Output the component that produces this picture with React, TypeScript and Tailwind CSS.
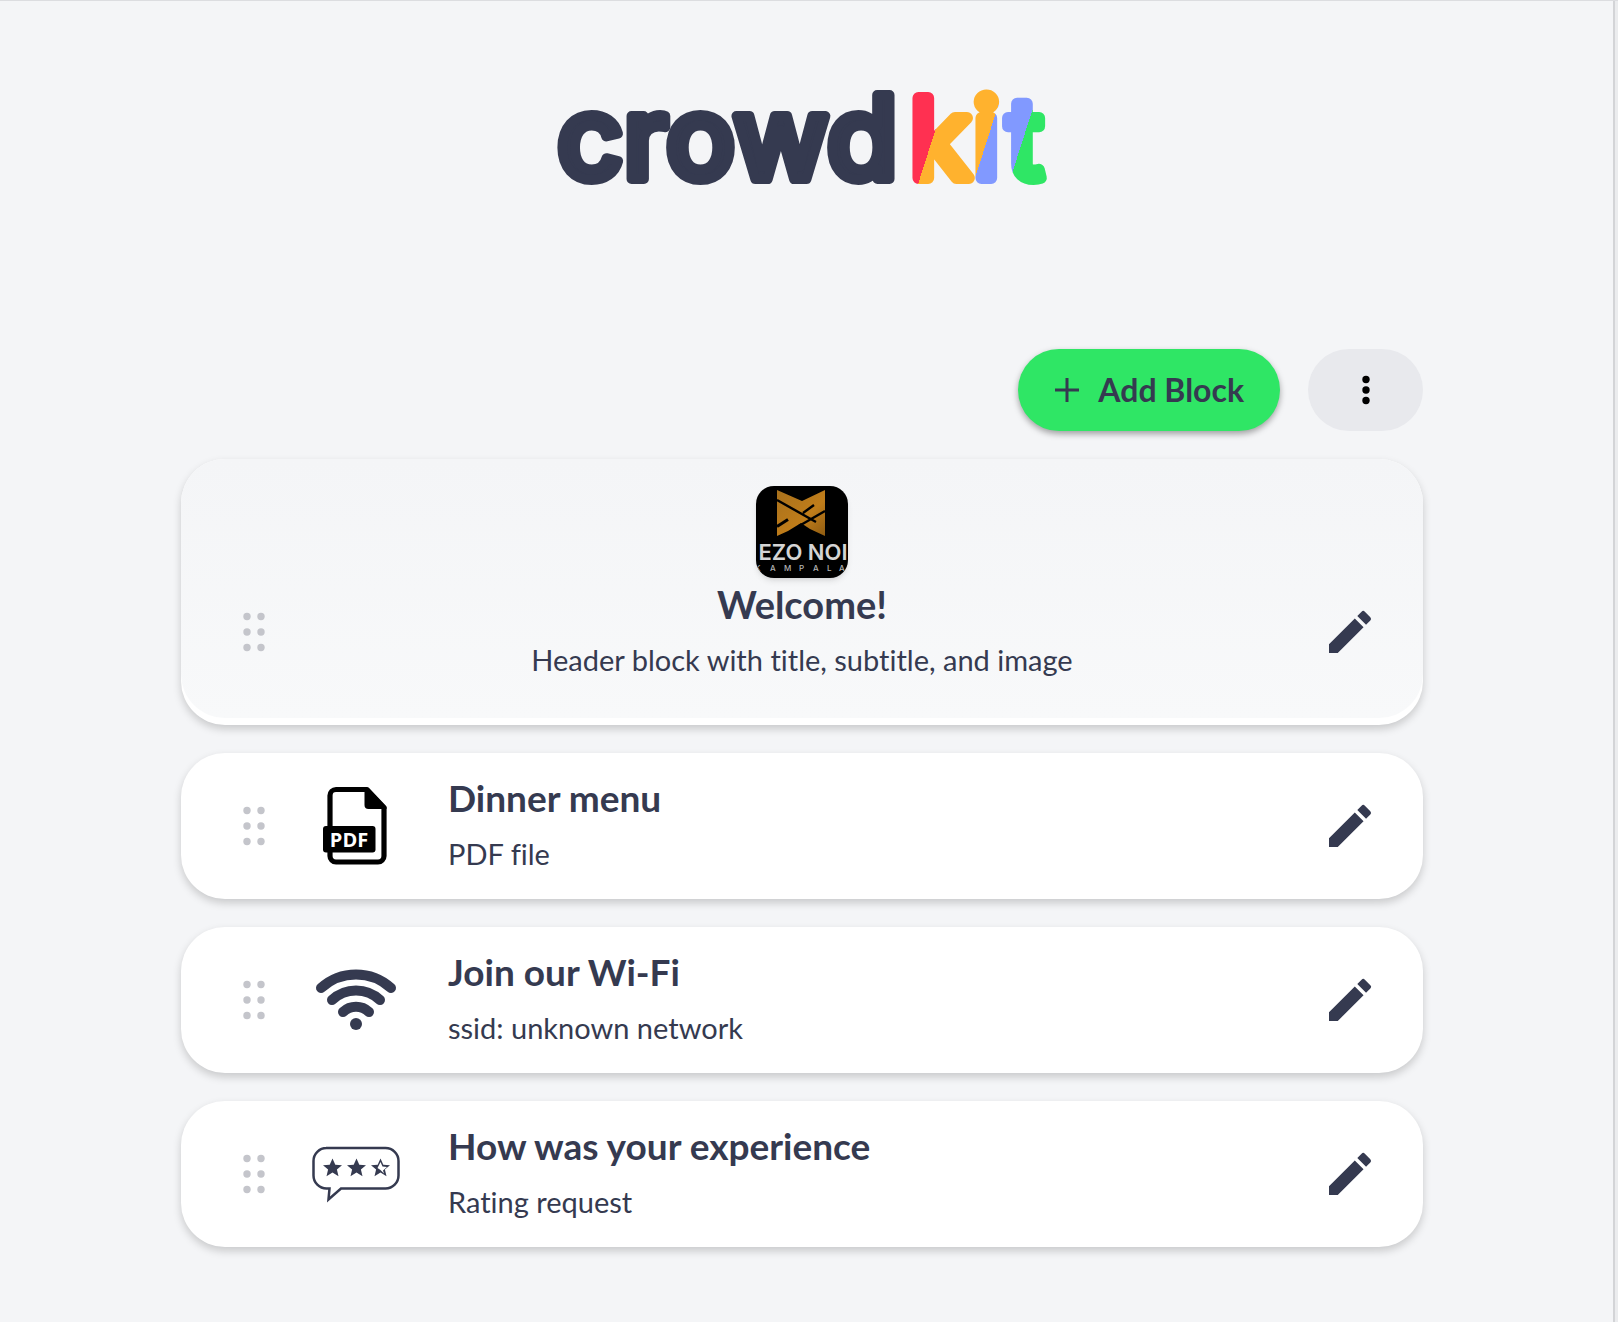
import React from 'react';

type BlockData = {
  id: string;
  title: string;
  subtitle: string;
  icon: React.ReactNode;
};

// Wordmark: "crowd" in one colour, then each letter of "kit" split diagonally into two
const Logo: React.FC = () => (
  <svg width="500" height="120" viewBox="0 0 500 120" role="img" aria-label="crowdkit" className="block overflow-visible">
    <defs>
      <linearGradient id="logo-k" gradientUnits="userSpaceOnUse" x1="364" y1="75" x2="384" y2="81.400">
        <stop offset="0.5" stopColor="#ff3051" />
        <stop offset="0.5" stopColor="#ffb22e" />
      </linearGradient>
      <linearGradient id="logo-i" gradientUnits="userSpaceOnUse" x1="423" y1="62.500" x2="443" y2="68.900">
        <stop offset="0.5" stopColor="#ffb22e" />
        <stop offset="0.5" stopColor="#8199ff" />
      </linearGradient>
      <linearGradient id="logo-t" gradientUnits="userSpaceOnUse" x1="459" y1="61.300" x2="479" y2="67.700">
        <stop offset="0.5" stopColor="#8199ff" />
        <stop offset="0.5" stopColor="#2fe665" />
      </linearGradient>
    </defs>
    <g strokeLinejoin="round" strokeLinecap="round" className="font-['Inter',sans-serif]">
      <text x="5" y="98" fontSize="115" strokeWidth="10" fill="#353a50" stroke="#353a50" className="font-medium">crowd</text>
      <g fontSize="110" strokeWidth="12">
        <text x="358" y="97" fill="url(#logo-k)" stroke="url(#logo-k)">k</text>
        <text x="421" y="97" fill="url(#logo-i)" stroke="url(#logo-i)">i</text>
        <text x="455" y="97" fill="url(#logo-t)" stroke="url(#logo-t)">t</text>
      </g>
    </g>
  </svg>
);

const DragHandle: React.FC = () => (
  <button type="button" aria-label="Drag block" className="flex w-14 cursor-grab justify-center">
    <svg width="24" height="40" viewBox="0 0 24 40" fill="#c4c5cb" className="block">
      <circle cx="5" cy="4.500" r="3.700" />
      <circle cx="19" cy="4.500" r="3.700" />
      <circle cx="5" cy="20" r="3.700" />
      <circle cx="19" cy="20" r="3.700" />
      <circle cx="5" cy="35.500" r="3.700" />
      <circle cx="19" cy="35.500" r="3.700" />
    </svg>
  </button>
);

const EditButton: React.FC = () => (
  <button type="button" aria-label="Edit block">
    <svg width="56" height="56" viewBox="0 0 24 24" fill="#353a50" className="block">
      <path d="M3 17.250V21h3.750L17.810 9.940l-3.750-3.750L3 17.250zM20.710 7.040a1 1 0 0 0 0-1.410l-2.340-2.340a1 1 0 0 0-1.410 0l-1.830 1.830 3.750 3.750 1.830-1.830z" />
    </svg>
  </button>
);

const PdfIcon: React.FC = () => (
  <svg width="88" height="88" viewBox="0 0 88 88" className="block">
    <path
      d="M24 7.500H55L72 25.500V74a6 6 0 0 1-6 6H24a6 6 0 0 1-6-6V13.500a6 6 0 0 1 6-6z"
      fill="none"
      stroke="#000"
      strokeWidth="5.200"
      strokeLinejoin="round"
    />
    <path d="M52.500 6H56L74.500 25V27H56.500a4 4 0 0 1-4-4z" fill="#000" />
    <rect x="11" y="44" width="52.500" height="26.500" rx="3" fill="#000" />
    <text x="37" y="64.500" fontSize="20" textAnchor="middle" fill="#fff" className="font-['Open_Sans',sans-serif] font-bold">
      PDF
    </text>
  </svg>
);

const WifiIcon: React.FC = () => (
  <svg width="88" height="88" viewBox="0 0 88 88" fill="none" stroke="#353a50" strokeWidth="10" strokeLinecap="round" className="block">
    <path d="M9 32a52 52 0 0 1 70 0" />
    <path d="M20 44a35 35 0 0 1 48 0" />
    <path d="M31 56a19 19 0 0 1 26 0" />
    <circle cx="44" cy="68" r="6" fill="#353a50" stroke="none" />
  </svg>
);

const STAR = 'M0-9.500 2.800-3.200 9.500-2.700 4.400 1.600 6 8.300 0 4.600-6 8.300-4.400 1.600-9.500-2.700-2.800-3.200z';

const RatingIcon: React.FC = () => (
  <svg width="88" height="88" viewBox="0 0 88 88" className="block">
    <path
      d="M14 18H73.500a13 13 0 0 1 13 13V45.500a13 13 0 0 1-13 13H29L16.500 69.500 17.500 58.500H14.500A13 13 0 0 1 1.500 45.500V31a13 13 0 0 1 13-13z"
      fill="none"
      stroke="#353a50"
      strokeWidth="2.500"
    />
    <g fill="#353a50">
      <path d={STAR} transform="translate(20.500 38)" />
      <path d={STAR} transform="translate(44.500 38)" />
      <path d={STAR} transform="translate(68.500 38)" />
    </g>
    <path d="M68.500 32 70.500 36.500 75 37 71 40.500 72 43.500 68.500 40 65.500 38z" fill="#fff" />
  </svg>
);

const BusinessImage: React.FC = () => (
  <div className="size-[92px] overflow-hidden rounded-[18px] bg-black shadow-md">
    <svg width="92" height="92" viewBox="0 0 92 92" role="img" aria-label="Business logo" className="block">
      <defs>
        <linearGradient id="gold" x1="0" y1="0" x2="1" y2="1">
          <stop offset="0" stopColor="#a8711c" />
          <stop offset="0.6" stopColor="#c07d1a" />
          <stop offset="1" stopColor="#8f5c12" />
        </linearGradient>
      </defs>
      <path d="M21 4 46 15 69 4V50L54 43 45 37 32 45 21 50z" fill="url(#gold)" />
      <path d="M21 14 60 36M47 27 58 19M69 25 43 40" stroke="#000" strokeWidth="2.400" fill="none" />
      <path d="M21 40.500 32 33.500" stroke="#000" strokeWidth="3" fill="none" />
      <text x="47" y="74" fontSize="22" textAnchor="middle" fill="#d4d4d4" className="font-['Inter',sans-serif] font-semibold">
        EZO NOI
      </text>
      <text y="85" x="-1 14 28 43 57 71 83" fontSize="8" fill="#b5b5b5" className="font-['Inter',sans-serif] font-medium">
        KAMPALA
      </text>
    </svg>
  </div>
);

const blocks: BlockData[] = [
  { id: 'menu', title: 'Dinner menu', subtitle: 'PDF file', icon: <PdfIcon /> },
  { id: 'wifi', title: 'Join our Wi-Fi', subtitle: 'ssid: unknown network', icon: <WifiIcon /> },
  { id: 'rating', title: 'How was your experience', subtitle: 'Rating request', icon: <RatingIcon /> },
];

const cardShadow = 'shadow-[0_4px_8px_rgba(0,0,0,0.18)]';

export default function App() {
  return (
    <div className="min-h-screen border-t border-[#dcdde0] bg-[#ebecee] pr-[3px] font-['Lato',sans-serif] text-[#353a50] [font-variant-ligatures:none]">
      <div className="min-h-screen border-r-2 border-[#d3d4d7] bg-[#f4f5f7] pr-[9px] pb-9">
        <header className="flex justify-center pt-[80px]">
          <Logo />
        </header>

        <main className="mx-auto w-full max-w-[1242px] pt-[148px]">
          <div className="flex items-stretch justify-end gap-7">
            <button
              type="button"
              className="flex h-[82px] items-center gap-[18px] rounded-full bg-[#2fe665] px-9 text-[32px] font-bold shadow-[0_3px_6px_rgba(0,0,0,0.35)]"
            >
              <svg width="26" height="26" viewBox="0 0 26 26" stroke="#353a50" strokeWidth="3" className="block">
                <path d="M13 1V25M1 13H25" />
              </svg>
              Add Block
            </button>
            <button type="button" aria-label="More options" className="flex w-[115px] items-center justify-center rounded-full bg-[#e8e9ed]">
              <svg width="8" height="30" viewBox="0 0 8 30" className="block">
                <circle cx="4" cy="4.500" r="3.700" />
                <circle cx="4" cy="15" r="3.700" />
                <circle cx="4" cy="25.500" r="3.700" />
              </svg>
            </button>
          </div>

          {/* Header block */}
          <section className={`mt-7 rounded-[44px] bg-white pb-[7px] ${cardShadow}`}>
            <div className="flex flex-col items-center rounded-[44px] bg-linear-to-b from-[#f4f5f7] to-[#f8f9fa] pt-[27px] pb-9">
              <BusinessImage />
              <div className="mt-1 flex w-full items-center justify-between px-[45px]">
                <DragHandle />
                <div className="text-center">
                  <h2 className="text-[38px] leading-[44px] font-bold">Welcome!</h2>
                  <p className="mt-3 text-[29px] leading-[44px]">Header block with title, subtitle, and image</p>
                </div>
                <EditButton />
              </div>
            </div>
          </section>

          {/* Content blocks */}
          <ul className="mt-7 flex flex-col gap-7">
            {blocks.map((block) => (
              <li key={block.id} className={`flex items-center rounded-[44px] bg-white px-[45px] py-[23px] ${cardShadow}`}>
                <DragHandle />
                <div className="ml-[30px]">{block.icon}</div>
                <div className="ml-12 flex-1">
                  <h2 className="text-[37px] leading-[44px] font-bold">{block.title}</h2>
                  <p className="mt-3 text-[29px] leading-[44px]">{block.subtitle}</p>
                </div>
                <EditButton />
              </li>
            ))}
          </ul>
        </main>
      </div>
    </div>
  );
}
